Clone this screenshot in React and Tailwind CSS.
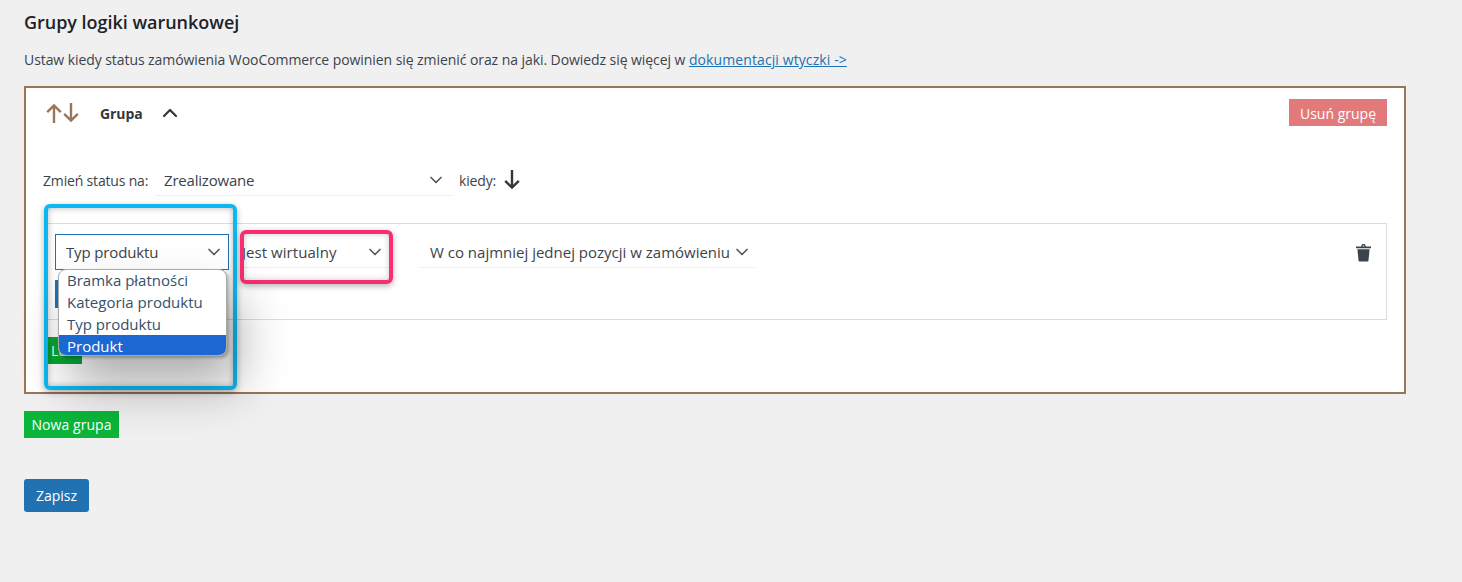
import { ChevronDown, ChevronUp } from 'lucide-react'

const TrashIcon = () => (
    <svg viewBox="0 0 16 19" className="h-[19px] w-[15px]" fill="#3c434a">
        <path d="M1.5 6h13l-1.2 12a1 1 0 0 1-1 1H3.7a1 1 0 0 1-1-1z" />
        <path d="M0 3.2h5.4L6.2 1.2C6.4.7 6.8.5 7.2.5h1.6c.4 0 .8.2 1 .7l.8 2H16V5H0zM6.9 3.2h2.2l-.4-1.2H7.3z" />
    </svg>
)

const Arrow = ({ down, className }) => (
    <svg viewBox="0 0 16 20" fill="none" stroke="currentColor" strokeWidth="2.4" className={`h-5 w-4 ${down ? 'rotate-180' : ''} ${className ?? ''}`}>
        <path d="M8 20V2.5M1.2 9.2L8 2.4l6.8 6.8" />
    </svg>
)

const Select = ({ label, className, boxed }) => (
    <div
        className={`flex items-center justify-between text-[15px] text-[#3c434a] ${boxed ? 'border border-[#2271b1]' : 'border-b border-[#eeeeee]'} ${className}`}
    >
        <span className="whitespace-nowrap">{label}</span>
        <ChevronDown className="h-[20px] w-[20px] shrink-0 text-[#50575e]" strokeWidth={2} />
    </div>
)

export default function App() {
    return (
        <div className="relative h-[582px] overflow-hidden bg-[#f0f0f1] pl-6 pt-3 font-['Open_Sans',sans-serif] text-[14px] text-[#3c434a]">
            <h2 className="text-[18px] font-semibold leading-5 tracking-[-0.03px] text-[#1d2327]">Grupy logiki warunkowej</h2>
            <p className="mt-[18px] h-[20px] leading-5 tracking-[-0.07px]">
                Ustaw kiedy status zamówienia WooCommerce powinien się zmienić oraz na jaki. Dowiedz się więcej w{' '}
                <a href="#docs" className="tracking-[0.1px] text-[#2271b1] underline">dokumentacji wtyczki -&gt;</a>
            </p>

            {/* Group card */}
            <div className="mt-4 h-[308px] w-[1382px] border-2 border-[#9a7658] bg-white pl-[18px] pr-[17px]">
                <div className="flex h-[50px] items-center">
                    <div className="ml-[2px] flex gap-px text-[#9a7658]">
                        <Arrow />
                        <Arrow down />
                    </div>
                    <span className="ml-[21px] text-[14px] font-bold tracking-[-0.1px] text-[#32373c]">Grupa</span>
                    <ChevronUp className="ml-[15px] h-[24px] w-[24px] text-[#32373c]" strokeWidth={2.2} />
                    <button className="ml-auto -mt-[2px] h-[27px] w-[98px] bg-[#e27a7b] pt-[2px] text-center text-white">Usuń grupę</button>
                </div>

                <div className="mt-[27px] flex h-[31px] items-center">
                    <span className="-ml-[1px] w-[113px] whitespace-nowrap tracking-[-0.17px]">Zmień status na:</span>
                    <Select label="Zrealizowane" className="h-[31px] w-[297px] pl-[8px] pr-[7px] tracking-[-0.2px]" />
                    <span className="ml-[6px] tracking-[-0.17px]">kiedy:</span>
                    <Arrow down className="-mt-[2px] ml-[8px] text-[#32373c]" />
                </div>

                {/* Conditions */}
                <div className="mt-[27px] h-[97px] border border-[#dcdcde] pl-[10px] pr-[15px] pt-[10px]">
                    <div className="flex items-start">
                        <Select label="Typ produktu" boxed className="h-[36px] w-[174px] pl-[10px] pr-[4px] tracking-[-0.15px]" />
                        <Select label="Jest wirtualny" className="ml-[13px] h-[34px] w-[150px] pr-[7px] pt-[3px] tracking-[0.05px]" />
                        <Select label="W co najmniej jednej pozycji w zamówieniu" className="ml-[27px] h-[34px] w-[336px] pl-[11px] pr-[3px] pt-[3px]" />
                        <div className="ml-auto pt-[9px]"><TrashIcon /></div>
                    </div>
                    <div className="mt-[10px] h-[28px] w-[60px] bg-[#2271b1]" />
                </div>

                <button className="ml-[2px] mt-[17px] h-[27px] w-[36px] bg-[#07a833] pl-[5px] text-left text-white">Lub</button>
            </div>

            <button className="mt-[17px] block h-[27px] w-[95px] bg-[#0ab53a] text-center tracking-[0.05px] text-white">Nowa grupa</button>
            <button className="mt-[41px] block h-[33px] w-[65px] rounded-[3px] bg-[#2271b1] text-center text-white">Zapisz</button>

            {/* Annotations over the screenshot */}
            <div className="absolute left-[44px] top-[204px] h-[186px] w-[193px] rounded-md border-4 border-[#0db7ef] shadow-[0_2px_6px_rgba(0,0,0,0.3),inset_0_0_6px_rgba(0,0,0,0.3)]" />
            <div className="absolute left-[240px] top-[230px] h-[54px] w-[153px] rounded-md border-4 border-[#f72e6f] shadow-[0_2px_6px_rgba(0,0,0,0.3),inset_0_0_6px_rgba(0,0,0,0.2)]" />

            {/* Open dropdown */}
            <ul className="absolute left-[58px] top-[269px] h-[87px] w-[169px] overflow-hidden rounded-lg border border-[#a9a9a9] bg-white text-[15px] leading-[22px] text-[#34506a] shadow-[2px_2px_3px_rgba(0,0,0,0.25),12px_30px_50px_rgba(0,0,0,0.32)]">
                <li className="h-[21px] pl-2 leading-[20px]">Bramka płatności</li>
                <li className="pl-2">Kategoria produktu</li>
                <li className="pl-2">Typ produktu</li>
                <li className="bg-[#1c68d3] pl-2 text-white">Produkt</li>
            </ul>
        </div>
    )
}
